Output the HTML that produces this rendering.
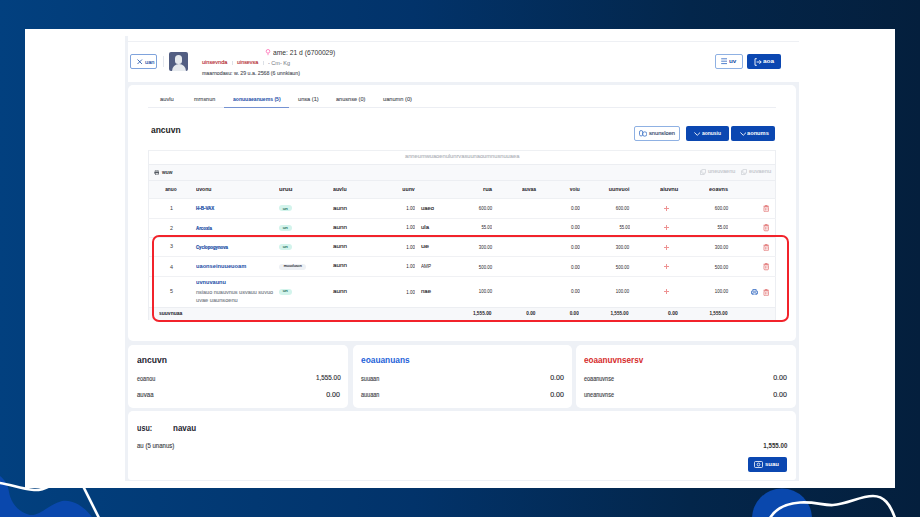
<!DOCTYPE html>
<html><head><meta charset="utf-8">
<style>
*{margin:0;padding:0;box-sizing:border-box}
html,body{width:920px;height:517px;overflow:hidden}
body{position:relative;font-family:"Liberation Sans",sans-serif;background:linear-gradient(90deg,#02407f 0%,#02336a 45%,#03264b 75%,#041f3d 100%)}
.a{position:absolute}
.t{position:absolute;white-space:nowrap;line-height:1;}
.tl{-webkit-text-stroke:0.12px currentColor}
.tb{-webkit-text-stroke:0.2px currentColor}
.card{position:absolute;background:#fff;border-radius:5px}
.hl{position:absolute;height:1px;background:#eceef2}
.btn-o{position:absolute;border:1px solid #8fb1e3;border-radius:2px;background:#fff}
.btn-b{position:absolute;background:#0b47b1;border-radius:2px}
.badge{position:absolute;height:6px;border-radius:3px;background:#d3f4ec}
.plus{position:absolute;width:5px;height:5px}
.plus:before{content:"";position:absolute;left:2px;top:0;width:1px;height:5px;background:#ee9292}
.plus:after{content:"";position:absolute;left:0;top:2px;width:5px;height:1px;background:#ee9292}
</style></head><body>
<svg class="a" style="left:0;top:0" width="920" height="517" viewBox="0 0 920 517">
  <path d="M0,476 C5,480 8,485 9,492 C11,503 18,512 30,515 C40,516 48,505 62,501 C72,499 84,506 92,517 L0,517 Z" fill="#0a48ad"/>
  <path d="M-2,482.8 C10,484 20,489 34,490 C40,490.4 44,489 50,486" fill="none" stroke="#fff" stroke-width="2.6"/>
  <path d="M83,486 L99,518" fill="none" stroke="#fff" stroke-width="2.6"/>
  <circle cx="782" cy="518.5" r="30" fill="#0a48ad"/>
  <path d="M770,518 C776,508 786,503.5 800,502.5 C815,501.5 823,505.5 833,505 C848,504 860,496 873,496 C884,496 890,504 895,518" fill="none" stroke="#fff" stroke-width="2.7"/>
</svg>
<!-- white slide card -->
<div class="a" style="left:25px;top:29px;width:870px;height:459px;background:#fff"></div>
<!-- app gray bg -->
<div class="a" style="left:124.5px;top:36px;width:674.5px;height:444.5px;background:#eef1f6"></div>
<!-- header white -->
<div class="a" style="left:128px;top:36px;width:671px;height:5px;background:#fff"></div>
<div class="a" style="left:125px;top:41px;width:674px;height:1px;background:#eef0f4"></div>
<div class="a" style="left:128px;top:42px;width:671px;height:40px;background:#fff"></div>
<!-- cards -->
<div class="card" style="left:128px;top:84.6px;width:668px;height:256.4px"></div>
<div class="card" style="left:128px;top:345px;width:220px;height:63.2px"></div>
<div class="card" style="left:352.5px;top:345px;width:219.5px;height:63.2px"></div>
<div class="card" style="left:575.5px;top:345px;width:220.5px;height:63.2px"></div>
<div class="card" style="left:128px;top:411.2px;width:668px;height:69.1px;border-radius:5px 5px 3px 3px"></div>

<!-- header contents -->
<div class="btn-o" style="left:130px;top:54px;width:27px;height:15px;border-color:#7fa3dc"></div>
<svg class="a" style="left:137px;top:59px" width="5.5" height="5.5" viewBox="0 0 5.5 5.5"><path d="M0.5,0.5 L5,5 M5,0.5 L0.5,5" stroke="#1b4ea6" stroke-width="0.8"/></svg>
<div class="a" style="left:163px;top:56px;width:1px;height:11px;background:#e3e7ee"></div>
<div class="a" style="left:169px;top:52px;width:19px;height:19px;background:#525e82;border-radius:2px;overflow:hidden">
  <div class="a" style="left:6px;top:2.5px;width:7px;height:9px;border-radius:3.5px 3.5px 3px 3px;background:#e6eaee"></div>
  <div class="a" style="left:2.5px;top:11.5px;width:14px;height:12px;border-radius:7px 7px 0 0;background:#e6eaee"></div>
</div>
<svg class="a" style="left:264.5px;top:49px" width="6" height="6.5" viewBox="0 0 6 6.5"><circle cx="3" cy="2.3" r="1.8" fill="none" stroke="#ff6fb5" stroke-width="0.8"/><path d="M3,4.2 V6.2" stroke="#ff6fb5" stroke-width="0.8"/></svg>
<div class="a" style="left:232px;top:60.5px;width:0.8px;height:4px;background:#dde1e7"></div>
<div class="a" style="left:263px;top:60.5px;width:0.8px;height:4px;background:#dde1e7"></div>
<div class="btn-o" style="left:714.6px;top:54px;width:28px;height:14.7px"></div>
<svg class="a" style="left:720.5px;top:58px" width="6.5" height="6.5" viewBox="0 0 6.5 6.5"><path d="M0.2,0.8 H6.3 M0.2,3.2 H6.3 M0.2,5.6 H6.3" stroke="#3f73c6" stroke-width="0.9"/></svg>
<div class="btn-b" style="left:746.8px;top:54px;width:34.2px;height:14.7px"></div>
<svg class="a" style="left:753.5px;top:57.5px" width="8" height="8" viewBox="0 0 8 8"><path d="M2.8,0.7 H1 V7.3 H2.8 M2.6,4 H7.2 M5.4,2.2 L7.2,4 L5.4,5.8" fill="none" stroke="#fff" stroke-width="0.9"/></svg>

<!-- tabs -->
<div class="hl" style="left:148px;top:107px;width:627.7px;background:#eceef3"></div>
<div class="a" style="left:224px;top:107px;width:65.3px;height:1.4px;background:#7592d2"></div>

<!-- buttons table -->
<div class="btn-o" style="left:633.7px;top:126px;width:46.6px;height:14.5px"></div>
<svg class="a" style="left:638.5px;top:130px" width="8.5" height="6.5" viewBox="0 0 8.5 6.5"><rect x="0.5" y="0.5" width="3.2" height="5.5" rx="1.6" fill="none" stroke="#3f73c6" stroke-width="0.8"/><circle cx="5.7" cy="4" r="2.2" fill="none" stroke="#3f73c6" stroke-width="0.8"/></svg>
<div class="btn-b" style="left:685.5px;top:126px;width:43px;height:14.5px"></div>
<svg class="a" style="left:694px;top:131.5px" width="6.5" height="4" viewBox="0 0 6.5 4"><path d="M0.4,0.5 L3.25,3.3 L6.1,0.5" fill="none" stroke="#fff" stroke-width="0.9"/></svg>
<div class="btn-b" style="left:731px;top:126px;width:44.4px;height:14.5px"></div>
<svg class="a" style="left:739.5px;top:131.5px" width="6.5" height="4" viewBox="0 0 6.5 4"><path d="M0.4,0.5 L3.25,3.3 L6.1,0.5" fill="none" stroke="#fff" stroke-width="0.9"/></svg>

<!-- table -->
<div class="a" style="left:148px;top:149.5px;width:627.5px;height:170px;border:1px solid #eceef2;border-bottom:none;border-top-color:#eef0f3"></div>
<div class="hl" style="left:148px;top:164px;width:627.5px"></div>
<div class="a" style="left:149px;top:165px;width:625.5px;height:15px;background:#f8f9fb"></div>
<div class="hl" style="left:148px;top:179.8px;width:627.5px"></div>
<div class="a" style="left:149px;top:180.8px;width:625.5px;height:17.5px;background:#f8f9fb"></div>
<div class="hl" style="left:148px;top:198.2px;width:627.5px;background:#eef0f3"></div>
<div class="hl" style="left:148px;top:217.7px;width:627.5px;background:#f0f1f4"></div>
<div class="hl" style="left:148px;top:237px;width:627.5px;background:#f0f1f4"></div>
<div class="hl" style="left:148px;top:256.2px;width:627.5px;background:#f0f1f4"></div>
<div class="hl" style="left:148px;top:276px;width:627.5px;background:#f0f1f4"></div>
<div class="hl" style="left:148px;top:306.6px;width:627.5px;background:#eceef2"></div>
<div class="a" style="left:149px;top:307.6px;width:625.5px;height:12px;background:#f7f8fa"></div>
<!-- print icon -->
<svg class="a" style="left:153.5px;top:169.8px" width="5.5" height="5" viewBox="0 0 5.5 5"><path d="M1.3,1.5 V0.3 H4.2 V1.5" fill="none" stroke="#555a62" stroke-width="0.6"/><rect x="0.3" y="1.5" width="4.9" height="2.3" rx="0.5" fill="#555a62"/><rect x="1.3" y="3" width="2.9" height="1.8" fill="#fff" stroke="#555a62" stroke-width="0.5"/></svg>
<!-- expand/collapse icons -->
<svg class="a" style="left:699.8px;top:168.8px" width="6" height="6" viewBox="0 0 6 6"><rect x="1.8" y="0.4" width="3.8" height="3.8" rx="0.5" fill="none" stroke="#c9ccd1" stroke-width="0.7"/><path d="M1.2,1.8 H0.4 V5.6 H4.2 V4.8" fill="none" stroke="#c9ccd1" stroke-width="0.7"/></svg>
<svg class="a" style="left:741.3px;top:168.8px" width="6" height="6" viewBox="0 0 6 6"><rect x="1.8" y="0.4" width="3.8" height="3.8" rx="0.5" fill="none" stroke="#c9ccd1" stroke-width="0.7"/><path d="M1.2,1.8 H0.4 V5.6 H4.2 V4.8" fill="none" stroke="#c9ccd1" stroke-width="0.7"/></svg>

<!-- badges -->
<div class="badge" style="left:278.5px;top:205.3px;width:13px"></div>
<div class="badge" style="left:278.5px;top:224.7px;width:13px"></div>
<div class="badge" style="left:278.5px;top:244px;width:13px"></div>
<div class="badge" style="left:278.6px;top:264px;width:27.4px;background:#eef1f5"></div>
<div class="badge" style="left:278.5px;top:288.8px;width:13px"></div>

<!-- plus signs -->
<div class="plus" style="left:664px;top:205.8px"></div>
<div class="plus" style="left:664px;top:225.2px"></div>
<div class="plus" style="left:664px;top:244.6px"></div>
<div class="plus" style="left:664px;top:264.2px"></div>
<div class="plus" style="left:664px;top:289.2px"></div>

<!-- trash icons -->
<svg class="a" style="left:762.8px;top:205px" width="6.4" height="7.2" viewBox="0 0 6.4 7.2"><path d="M0.4,1.3 H6 M2.2,1.2 V0.5 H4.2 V1.2" fill="none" stroke="#e06b6b" stroke-width="0.75"/><rect x="1" y="1.9" width="4.4" height="4.9" rx="0.9" fill="none" stroke="#e06b6b" stroke-width="0.75"/><path d="M2.5,3.1 V5.6 M3.9,3.1 V5.6" stroke="#e06b6b" stroke-width="0.6"/></svg>
<svg class="a" style="left:762.8px;top:224.4px" width="6.4" height="7.2" viewBox="0 0 6.4 7.2"><path d="M0.4,1.3 H6 M2.2,1.2 V0.5 H4.2 V1.2" fill="none" stroke="#e06b6b" stroke-width="0.75"/><rect x="1" y="1.9" width="4.4" height="4.9" rx="0.9" fill="none" stroke="#e06b6b" stroke-width="0.75"/><path d="M2.5,3.1 V5.6 M3.9,3.1 V5.6" stroke="#e06b6b" stroke-width="0.6"/></svg>
<svg class="a" style="left:762.8px;top:243.8px" width="6.4" height="7.2" viewBox="0 0 6.4 7.2"><path d="M0.4,1.3 H6 M2.2,1.2 V0.5 H4.2 V1.2" fill="none" stroke="#e06b6b" stroke-width="0.75"/><rect x="1" y="1.9" width="4.4" height="4.9" rx="0.9" fill="none" stroke="#e06b6b" stroke-width="0.75"/><path d="M2.5,3.1 V5.6 M3.9,3.1 V5.6" stroke="#e06b6b" stroke-width="0.6"/></svg>
<svg class="a" style="left:762.8px;top:263.4px" width="6.4" height="7.2" viewBox="0 0 6.4 7.2"><path d="M0.4,1.3 H6 M2.2,1.2 V0.5 H4.2 V1.2" fill="none" stroke="#e06b6b" stroke-width="0.75"/><rect x="1" y="1.9" width="4.4" height="4.9" rx="0.9" fill="none" stroke="#e06b6b" stroke-width="0.75"/><path d="M2.5,3.1 V5.6 M3.9,3.1 V5.6" stroke="#e06b6b" stroke-width="0.6"/></svg>
<svg class="a" style="left:762.8px;top:288.5px" width="6.4" height="7.2" viewBox="0 0 6.4 7.2"><path d="M0.4,1.3 H6 M2.2,1.2 V0.5 H4.2 V1.2" fill="none" stroke="#e06b6b" stroke-width="0.75"/><rect x="1" y="1.9" width="4.4" height="4.9" rx="0.9" fill="none" stroke="#e06b6b" stroke-width="0.75"/><path d="M2.5,3.1 V5.6 M3.9,3.1 V5.6" stroke="#e06b6b" stroke-width="0.6"/></svg>
<!-- print row5 -->
<svg class="a" style="left:751px;top:288.5px" width="7" height="6.5" viewBox="0 0 7 6.5"><path d="M1.8,2 V0.5 H5.2 V2 M0.5,2.2 H6.5 V4.8 H5.3 M1.7,4.8 H0.5 V2.2 M1.8,3.8 H5.2 V6 H1.8 Z" fill="none" stroke="#3a6fc4" stroke-width="0.8"/></svg>

<!-- red highlight box -->
<div class="a" style="left:152px;top:234.5px;width:637px;height:87.5px;border:2px solid #f2232b;border-radius:7px"></div>

<!-- bottom button -->
<div class="btn-b" style="left:748.2px;top:457.2px;width:39px;height:14.4px"></div>
<svg class="a" style="left:754px;top:461px" width="9" height="7" viewBox="0 0 9 7"><rect x="0.5" y="0.5" width="8" height="6" rx="1" fill="none" stroke="#fff" stroke-width="0.8"/><circle cx="4.5" cy="3.5" r="1.4" fill="none" stroke="#fff" stroke-width="0.8"/></svg>

<div class="t" id="t0" style="left:273.00px;top:48.65px;font-size:8px;font-weight:400;color:#333;transform:scaleX(0.839);transform-origin:left">ame: 21 d (6700029)</div>
<div class="t tl" id="t1" style="left:201.50px;top:59.60px;font-size:5.75px;font-weight:400;color:#b3242a;transform:scaleX(0.965);transform-origin:left">uinsevnda</div>
<div class="t tl" id="t2" style="left:236.60px;top:59.62px;font-size:5.75px;font-weight:400;color:#b3242a;transform:scaleX(0.934);transform-origin:left">uinsevsa</div>
<div class="t" id="t3" style="left:267.60px;top:60.71px;font-size:5.2px;font-weight:400;color:#6f747c;transform:scaleX(1.060);transform-origin:left">- Cm- Kg</div>
<div class="t tl" id="t4" style="left:201.50px;top:70.84px;font-size:5.75px;font-weight:400;color:#4f535b;transform:scaleX(0.909);transform-origin:left">maarnodasu: w. 29 u.a. 2568 (6 unnkiaun)</div>
<div class="t" id="t5" style="left:729.30px;top:58.93px;font-size:5.75px;font-weight:700;color:#1b4ea6;transform:scaleX(1.101);transform-origin:left">uv</div>
<div class="t" id="t6" style="left:762.80px;top:58.93px;font-size:5.75px;font-weight:700;color:#ffffff;transform:scaleX(1.119);transform-origin:left">aoa</div>
<div class="t tl" id="t7" style="left:145.00px;top:59.61px;font-size:5.75px;font-weight:400;color:#1b4ea6;transform:scaleX(0.990);transform-origin:left">uan</div>
<div class="t tl" id="t8" style="left:159.60px;top:95.52px;font-size:6.24px;font-weight:400;color:#4a4e55;transform:scaleX(0.926);transform-origin:left">auvlu</div>
<div class="t tl" id="t9" style="left:193.80px;top:95.51px;font-size:6.24px;font-weight:400;color:#4a4e55;transform:scaleX(0.874);transform-origin:left">mrnsnun</div>
<div class="t" id="t10" style="left:232.70px;top:96.65px;font-size:5.61px;font-weight:700;color:#1b4ea6;transform:scaleX(0.903);transform-origin:left">aonuuaeanuems (5)</div>
<div class="t tl" id="t11" style="left:298.00px;top:95.51px;font-size:6.24px;font-weight:400;color:#4a4e55;transform:scaleX(0.905);transform-origin:left">unsa (1)</div>
<div class="t tl" id="t12" style="left:335.80px;top:95.51px;font-size:6.24px;font-weight:400;color:#4a4e55;transform:scaleX(0.893);transform-origin:left">anusnse (0)</div>
<div class="t tl" id="t13" style="left:383.00px;top:95.50px;font-size:6.24px;font-weight:400;color:#4a4e55;transform:scaleX(0.909);transform-origin:left">uanumn (0)</div>
<div class="t" id="t14" style="left:151.40px;top:125.68px;font-size:9px;font-weight:700;color:#222;transform:scaleX(0.939);transform-origin:left">ancuvn</div>
<div class="t tl" id="t15" style="left:648.50px;top:131.06px;font-size:5.75px;font-weight:400;color:#283c64;transform:scaleX(0.992);transform-origin:left">snunsloen</div>
<div class="t" id="t16" style="left:701.50px;top:131.05px;font-size:5.75px;font-weight:700;color:#fff;transform:scaleX(0.862);transform-origin:left">aonusiu</div>
<div class="t" id="t17" style="left:746.70px;top:131.04px;font-size:5.75px;font-weight:700;color:#fff;transform:scaleX(0.989);transform-origin:left">aonums</div>
<div class="t tl" id="t18" style="left:405.00px;top:153.42px;font-size:6.0px;font-weight:400;color:#b0b4ba;transform:scaleX(0.952);transform-origin:left">anneumwuaoenulunrvasuunaoumnusnuuaea</div>
<div class="t" id="t19" style="left:161.60px;top:169.70px;font-size:5.75px;font-weight:700;color:#333;transform:scaleX(0.834);transform-origin:left">wuw</div>
<div class="t tl" id="t20" style="left:708.00px;top:169.17px;font-size:5.75px;font-weight:400;color:#c3c6cc;transform:scaleX(0.959);transform-origin:left">uneuvaenu</div>
<div class="t tl" id="t21" style="left:749.30px;top:169.17px;font-size:5.75px;font-weight:400;color:#c3c6cc;transform:scaleX(1.002);transform-origin:left">euvaenu</div>
<div class="t" id="t22" style="left:164.32px;top:187.05px;font-size:5.75px;font-weight:700;color:#1f2228;transform:scaleX(0.836);transform-origin:center">anuo</div>
<div class="t" id="t23" style="left:195.50px;top:187.05px;font-size:5.75px;font-weight:700;color:#1f2228;transform:scaleX(0.899);transform-origin:left">uvonu</div>
<div class="t" id="t24" style="left:278.50px;top:187.05px;font-size:5.75px;font-weight:700;color:#1f2228;transform:scaleX(1.056);transform-origin:left">uruu</div>
<div class="t" id="t25" style="left:333.00px;top:187.05px;font-size:5.75px;font-weight:700;color:#1f2228;transform:scaleX(0.911);transform-origin:left">auvlu</div>
<div class="t" id="t26" style="left:401.45px;top:187.05px;font-size:5.75px;font-weight:700;color:#1f2228;transform:scaleX(0.909);transform-origin:right">uunv</div>
<div class="t" id="t27" style="left:482.75px;top:187.04px;font-size:5.75px;font-weight:700;color:#1f2228;transform:scaleX(1.005);transform-origin:right">rua</div>
<div class="t" id="t28" style="left:521.60px;top:187.04px;font-size:5.75px;font-weight:700;color:#1f2228;transform:scaleX(0.858);transform-origin:left">auvaa</div>
<div class="t" id="t29" style="left:567.87px;top:187.05px;font-size:5.75px;font-weight:700;color:#1f2228;transform:scaleX(0.845);transform-origin:right">voiu</div>
<div class="t" id="t30" style="left:607.14px;top:187.04px;font-size:5.75px;font-weight:700;color:#1f2228;transform:scaleX(0.917);transform-origin:right">uunvuoi</div>
<div class="t" id="t31" style="left:660.20px;top:187.05px;font-size:5.75px;font-weight:700;color:#1f2228;transform:scaleX(0.988);transform-origin:left">aiuvnu</div>
<div class="t" id="t32" style="left:709.00px;top:187.06px;font-size:5.75px;font-weight:700;color:#1f2228;transform:scaleX(0.958);transform-origin:left">eoavns</div>
<div class="t" id="t33" style="left:169.52px;top:205.98px;font-size:5.3px;font-weight:400;color:#3a3d42;transform:scaleX(1.016);transform-origin:center">1</div>
<div class="t tb" id="t34" style="left:195.70px;top:206.12px;font-size:5px;font-weight:700;color:#1b4ea6;transform:scaleX(0.894);transform-origin:left">H-B-VAX</div>
<div class="t tl" id="t35" style="left:333.00px;top:204.61px;font-size:6.25px;font-weight:400;color:#1e2025;transform:scaleX(1.007);transform-origin:left">aunn</div>
<div class="t" id="t36" style="left:404.31px;top:205.81px;font-size:5.6px;font-weight:400;color:#1f2228;transform:scaleX(0.799);transform-origin:right">1.00</div>
<div class="t tl" id="t37" style="left:421.00px;top:204.62px;font-size:6.25px;font-weight:400;color:#1e2025;transform:scaleX(0.935);transform-origin:left">uaeo</div>
<div class="t" id="t38" style="left:474.69px;top:205.84px;font-size:5.6px;font-weight:400;color:#1f2228;transform:scaleX(0.777);transform-origin:right">600.00</div>
<div class="t" id="t39" style="left:568.81px;top:205.86px;font-size:5.6px;font-weight:400;color:#1f2228;transform:scaleX(0.826);transform-origin:right">0.00</div>
<div class="t" id="t40" style="left:612.39px;top:205.84px;font-size:5.6px;font-weight:400;color:#1f2228;transform:scaleX(0.777);transform-origin:right">600.00</div>
<div class="t" id="t41" style="left:710.89px;top:205.84px;font-size:5.6px;font-weight:400;color:#1f2228;transform:scaleX(0.777);transform-origin:right">600.00</div>
<div class="t" id="t42" style="left:169.52px;top:225.54px;font-size:5.3px;font-weight:400;color:#3a3d42;transform:scaleX(1.016);transform-origin:center">2</div>
<div class="t tb" id="t43" style="left:195.70px;top:225.70px;font-size:5px;font-weight:700;color:#1b4ea6;transform:scaleX(0.872);transform-origin:left">Arcoxia</div>
<div class="t tl" id="t44" style="left:333.00px;top:224.17px;font-size:6.25px;font-weight:400;color:#1e2025;transform:scaleX(1.007);transform-origin:left">aunn</div>
<div class="t" id="t45" style="left:404.31px;top:225.37px;font-size:5.6px;font-weight:400;color:#1f2228;transform:scaleX(0.799);transform-origin:right">1.00</div>
<div class="t tl" id="t46" style="left:421.00px;top:224.17px;font-size:6.25px;font-weight:400;color:#1e2025;transform:scaleX(0.959);transform-origin:left">ula</div>
<div class="t" id="t47" style="left:477.80px;top:225.41px;font-size:5.6px;font-weight:400;color:#1f2228;transform:scaleX(0.750);transform-origin:right">55.00</div>
<div class="t" id="t48" style="left:568.81px;top:225.42px;font-size:5.6px;font-weight:400;color:#1f2228;transform:scaleX(0.826);transform-origin:right">0.00</div>
<div class="t" id="t49" style="left:615.50px;top:225.41px;font-size:5.6px;font-weight:400;color:#1f2228;transform:scaleX(0.750);transform-origin:right">55.00</div>
<div class="t" id="t50" style="left:714.00px;top:225.41px;font-size:5.6px;font-weight:400;color:#1f2228;transform:scaleX(0.750);transform-origin:right">55.00</div>
<div class="t" id="t51" style="left:169.52px;top:244.42px;font-size:5.3px;font-weight:400;color:#3a3d42;transform:scaleX(1.016);transform-origin:center">3</div>
<div class="t tb" id="t52" style="left:195.70px;top:244.56px;font-size:5px;font-weight:700;color:#1b4ea6;transform:scaleX(0.859);transform-origin:left">Cyclopogynova</div>
<div class="t tl" id="t53" style="left:333.00px;top:243.05px;font-size:6.25px;font-weight:400;color:#1e2025;transform:scaleX(1.007);transform-origin:left">aunn</div>
<div class="t" id="t54" style="left:404.31px;top:245.05px;font-size:5.6px;font-weight:400;color:#1f2228;transform:scaleX(0.799);transform-origin:right">1.00</div>
<div class="t tl" id="t55" style="left:421.00px;top:243.04px;font-size:6.25px;font-weight:400;color:#1e2025;transform:scaleX(1.151);transform-origin:left">ue</div>
<div class="t" id="t56" style="left:474.69px;top:245.08px;font-size:5.6px;font-weight:400;color:#1f2228;transform:scaleX(0.777);transform-origin:right">300.00</div>
<div class="t" id="t57" style="left:568.81px;top:245.10px;font-size:5.6px;font-weight:400;color:#1f2228;transform:scaleX(0.826);transform-origin:right">0.00</div>
<div class="t" id="t58" style="left:612.39px;top:245.08px;font-size:5.6px;font-weight:400;color:#1f2228;transform:scaleX(0.777);transform-origin:right">300.00</div>
<div class="t" id="t59" style="left:710.89px;top:245.08px;font-size:5.6px;font-weight:400;color:#1f2228;transform:scaleX(0.777);transform-origin:right">300.00</div>
<div class="t" id="t60" style="left:169.52px;top:264.66px;font-size:5.3px;font-weight:400;color:#3a3d42;transform:scaleX(1.016);transform-origin:center">4</div>
<div class="t" id="t61" style="left:195.70px;top:263.58px;font-size:5.75px;font-weight:700;color:#1b4ea6;transform:scaleX(0.990);transform-origin:left">uaonseinuueuoam</div>
<div class="t tl" id="t62" style="left:333.00px;top:262.49px;font-size:6.25px;font-weight:400;color:#1e2025;transform:scaleX(1.007);transform-origin:left">aunn</div>
<div class="t" id="t63" style="left:404.31px;top:264.49px;font-size:5.6px;font-weight:400;color:#1f2228;transform:scaleX(0.799);transform-origin:right">1.00</div>
<div class="t" id="t64" style="left:421.00px;top:263.97px;font-size:5px;font-weight:400;color:#1e2025;transform:scaleX(0.922);transform-origin:left">AMP</div>
<div class="t" id="t65" style="left:474.69px;top:264.52px;font-size:5.6px;font-weight:400;color:#1f2228;transform:scaleX(0.777);transform-origin:right">500.00</div>
<div class="t" id="t66" style="left:568.81px;top:264.54px;font-size:5.6px;font-weight:400;color:#1f2228;transform:scaleX(0.826);transform-origin:right">0.00</div>
<div class="t" id="t67" style="left:612.39px;top:264.52px;font-size:5.6px;font-weight:400;color:#1f2228;transform:scaleX(0.777);transform-origin:right">500.00</div>
<div class="t" id="t68" style="left:710.89px;top:264.52px;font-size:5.6px;font-weight:400;color:#1f2228;transform:scaleX(0.777);transform-origin:right">500.00</div>
<div class="t" id="t69" style="left:169.52px;top:289.20px;font-size:5.3px;font-weight:400;color:#3a3d42;transform:scaleX(1.016);transform-origin:center">5</div>
<div class="t tl" id="t70" style="left:333.00px;top:287.83px;font-size:6.25px;font-weight:400;color:#1e2025;transform:scaleX(1.007);transform-origin:left">aunn</div>
<div class="t" id="t71" style="left:404.31px;top:289.83px;font-size:5.6px;font-weight:400;color:#1f2228;transform:scaleX(0.799);transform-origin:right">1.00</div>
<div class="t tl" id="t72" style="left:421.00px;top:287.83px;font-size:6.25px;font-weight:400;color:#1e2025;transform:scaleX(0.958);transform-origin:left">nae</div>
<div class="t" id="t73" style="left:474.69px;top:289.06px;font-size:5.6px;font-weight:400;color:#1f2228;transform:scaleX(0.777);transform-origin:right">100.00</div>
<div class="t" id="t74" style="left:568.81px;top:289.08px;font-size:5.6px;font-weight:400;color:#1f2228;transform:scaleX(0.826);transform-origin:right">0.00</div>
<div class="t" id="t75" style="left:612.39px;top:289.06px;font-size:5.6px;font-weight:400;color:#1f2228;transform:scaleX(0.777);transform-origin:right">100.00</div>
<div class="t" id="t76" style="left:710.89px;top:289.06px;font-size:5.6px;font-weight:400;color:#1f2228;transform:scaleX(0.777);transform-origin:right">100.00</div>
<div class="t" id="t77" style="left:195.70px;top:280.16px;font-size:5.75px;font-weight:700;color:#1b4ea6;transform:scaleX(0.978);transform-origin:left">uvnuvaunu</div>
<div class="t tl" id="t78" style="left:195.70px;top:289.50px;font-size:5.75px;font-weight:400;color:#7a7f88;transform:scaleX(0.956);transform-origin:left">nsiauo nuauvnus usvauu suvuo</div>
<div class="t tl" id="t79" style="left:195.70px;top:298.28px;font-size:5.75px;font-weight:400;color:#7a7f88;transform:scaleX(0.980);transform-origin:left">uvae uaunsoenu</div>
<div class="t tl" id="t80" style="left:282.77px;top:206.65px;font-size:4.02px;font-weight:400;color:#1d6f5c;transform:scaleX(1.119);transform-origin:center">un</div>
<div class="t tl" id="t81" style="left:282.77px;top:225.87px;font-size:4.02px;font-weight:400;color:#1d6f5c;transform:scaleX(1.119);transform-origin:center">un</div>
<div class="t tl" id="t82" style="left:282.77px;top:244.63px;font-size:4.02px;font-weight:400;color:#1d6f5c;transform:scaleX(1.119);transform-origin:center">un</div>
<div class="t tl" id="t83" style="left:282.59px;top:264.43px;font-size:4.02px;font-weight:400;color:#2b2e33;transform:scaleX(0.927);transform-origin:center">muuvluson</div>
<div class="t tl" id="t84" style="left:282.77px;top:289.41px;font-size:4.02px;font-weight:400;color:#1d6f5c;transform:scaleX(1.119);transform-origin:center">un</div>
<div class="t" id="t85" style="left:159.00px;top:311.04px;font-size:5.75px;font-weight:700;color:#1f2228;transform:scaleX(0.868);transform-origin:left">suuvnuaa</div>
<div class="t" id="t86" style="left:472.23px;top:311.47px;font-size:5px;font-weight:700;color:#1f2228;transform:scaleX(0.955);transform-origin:right">1,555.00</div>
<div class="t" id="t87" style="left:525.63px;top:311.47px;font-size:5px;font-weight:700;color:#1f2228;transform:scaleX(0.935);transform-origin:center">0.00</div>
<div class="t" id="t88" style="left:569.27px;top:311.47px;font-size:5px;font-weight:700;color:#1f2228;transform:scaleX(0.935);transform-origin:right">0.00</div>
<div class="t" id="t89" style="left:609.13px;top:311.47px;font-size:5px;font-weight:700;color:#1f2228;transform:scaleX(0.925);transform-origin:right">1,555.00</div>
<div class="t" id="t90" style="left:668.07px;top:311.47px;font-size:5px;font-weight:700;color:#1f2228;transform:scaleX(1.007);transform-origin:right">0.00</div>
<div class="t" id="t91" style="left:707.93px;top:311.47px;font-size:5px;font-weight:700;color:#1f2228;transform:scaleX(0.925);transform-origin:right">1,555.00</div>
<div class="t" id="t92" style="left:136.70px;top:356.24px;font-size:9px;font-weight:700;color:#1e2430;transform:scaleX(0.952);transform-origin:left">ancuvn</div>
<div class="t tl" id="t93" style="left:136.70px;top:376.19px;font-size:6.34px;font-weight:400;color:#3a3d43;transform:scaleX(0.866);transform-origin:left">eoanou</div>
<div class="t tl" id="t94" style="left:136.70px;top:391.83px;font-size:6.34px;font-weight:400;color:#3a3d43;transform:scaleX(0.957);transform-origin:left">auvaa</div>
<div class="t tl" id="t95" style="left:314.53px;top:375.42px;font-size:6.6px;font-weight:400;color:#26292e;transform:scaleX(0.962);transform-origin:right">1,555.00</div>
<div class="t tl" id="t96" style="left:327.36px;top:391.91px;font-size:6.6px;font-weight:400;color:#26292e;transform:scaleX(1.067);transform-origin:right">0.00</div>
<div class="t" id="t97" style="left:360.70px;top:356.24px;font-size:9px;font-weight:700;color:#2563d9;transform:scaleX(0.927);transform-origin:left">eoauanuans</div>
<div class="t tl" id="t98" style="left:360.70px;top:376.21px;font-size:6.34px;font-weight:400;color:#3a3d43;transform:scaleX(0.881);transform-origin:left">suuaan</div>
<div class="t tl" id="t99" style="left:360.70px;top:391.85px;font-size:6.34px;font-weight:400;color:#3a3d43;transform:scaleX(0.866);transform-origin:left">auuaan</div>
<div class="t tl" id="t100" style="left:550.76px;top:375.45px;font-size:6.6px;font-weight:400;color:#26292e;transform:scaleX(1.067);transform-origin:right">0.00</div>
<div class="t tl" id="t101" style="left:550.76px;top:391.91px;font-size:6.6px;font-weight:400;color:#26292e;transform:scaleX(1.067);transform-origin:right">0.00</div>
<div class="t" id="t102" style="left:584.20px;top:356.24px;font-size:9px;font-weight:700;color:#d62c2c;transform:scaleX(0.905);transform-origin:left">eoaanuvnsersv</div>
<div class="t tl" id="t103" style="left:584.20px;top:376.19px;font-size:6.34px;font-weight:400;color:#3a3d43;transform:scaleX(0.870);transform-origin:left">eoaanuvnse</div>
<div class="t tl" id="t104" style="left:584.20px;top:391.85px;font-size:6.34px;font-weight:400;color:#3a3d43;transform:scaleX(0.870);transform-origin:left">uneanuvnse</div>
<div class="t tl" id="t105" style="left:774.16px;top:375.45px;font-size:6.6px;font-weight:400;color:#26292e;transform:scaleX(1.067);transform-origin:right">0.00</div>
<div class="t tl" id="t106" style="left:774.16px;top:391.91px;font-size:6.6px;font-weight:400;color:#26292e;transform:scaleX(1.067);transform-origin:right">0.00</div>
<div class="t" id="t107" style="left:136.90px;top:423.76px;font-size:8.5px;font-weight:700;color:#1e2430;transform:scaleX(0.847);transform-origin:left">usu:</div>
<div class="t" id="t108" style="left:173.00px;top:423.75px;font-size:8.5px;font-weight:700;color:#1e2430;transform:scaleX(0.944);transform-origin:left">navau</div>
<div class="t tl" id="t109" style="left:136.90px;top:443.49px;font-size:6.34px;font-weight:400;color:#3a3d43;transform:scaleX(0.955);transform-origin:left">au (5 unanus)</div>
<div class="t" id="t110" style="left:761.69px;top:443.18px;font-size:6.5px;font-weight:700;color:#333;transform:scaleX(0.948);transform-origin:right">1,555.00</div>
<div class="t" id="t111" style="left:765.00px;top:461.92px;font-size:5.75px;font-weight:700;color:#fff;transform:scaleX(1.043);transform-origin:left">suau</div>
</body></html>
